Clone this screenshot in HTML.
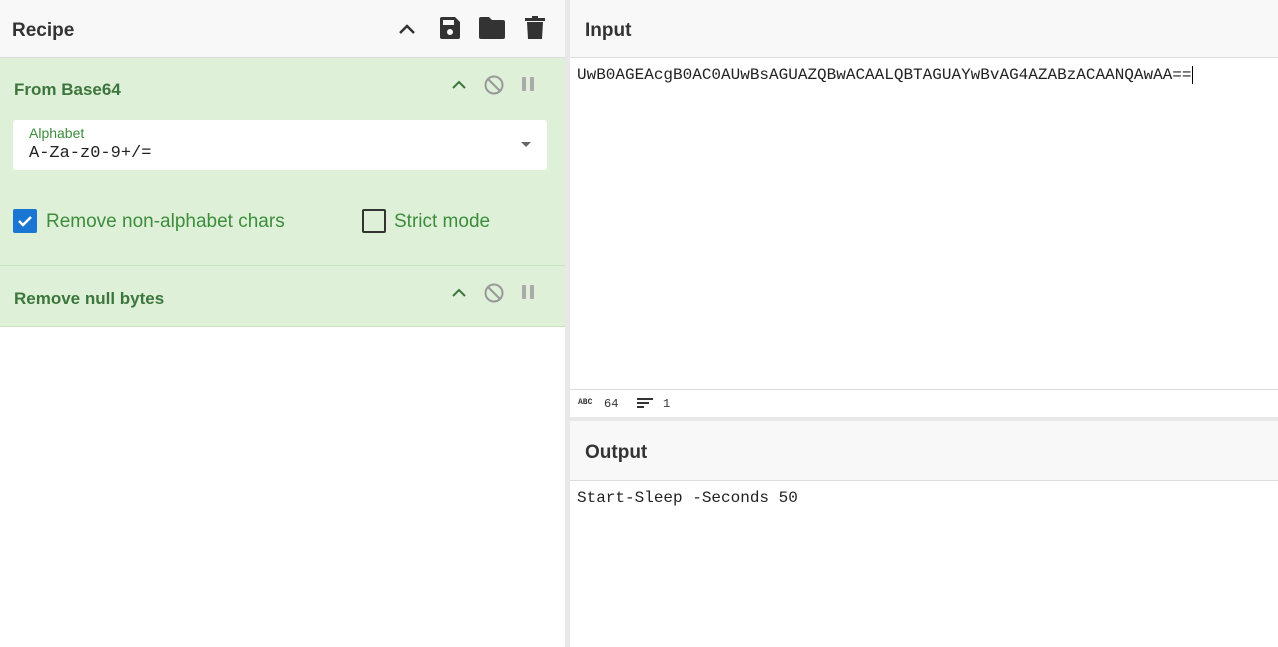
<!DOCTYPE html>
<html><head><meta charset="utf-8"><style>
*{box-sizing:border-box;margin:0;padding:0}
body{width:1278px;height:647px;overflow:hidden;background:#fff;font-family:"Liberation Sans",sans-serif;position:relative}
.left{position:absolute;left:0;top:0;width:565px;height:647px;background:#fff}
.div{position:absolute;left:565px;top:0;width:5px;height:647px;background:#e8e8e8}
.right{position:absolute;left:570px;top:0;width:708px;height:647px}
.hdr{height:58px;background:#f8f8f8;border-bottom:1px solid #ddd;display:flex;align-items:center;padding-left:12px;padding-top:5px;font-size:19px;font-weight:bold;color:#333}
.op{background:#dff0d8;border-bottom:1px solid #c9e3bf;position:relative}
.optitle{position:absolute;left:14px;font-weight:bold;font-size:17px;color:#3c763d}
.mono{font-family:"Liberation Mono",monospace}
</style></head><body>
<div class="left">
 <div class="hdr" style="height:58px">Recipe
  <svg style="position:absolute;left:396px;top:18px" width="22" height="22" viewBox="0 0 22 22"><path d="M4 15 L11 8 L18 15" stroke="#333" stroke-width="2.5" fill="none"/></svg>
  <svg style="position:absolute;left:438px;top:16px" width="24" height="24" viewBox="0 0 24 24"><path d="M2 3 a2 2 0 0 1 2-2 h13 l5 5 v15 a2 2 0 0 1-2 2 h-16 a2 2 0 0 1-2-2z" fill="#333"/><rect x="5" y="4" width="11" height="5" fill="#f8f8f8"/><circle cx="12" cy="16" r="3" fill="#f8f8f8"/></svg>
  <svg style="position:absolute;left:479px;top:17px" width="26" height="22" viewBox="0 0 26 22"><path d="M0 2 a2 2 0 0 1 2-2 h8 l3 3 h11 a2 2 0 0 1 2 2 v15 a2 2 0 0 1-2 2 h-22 a2 2 0 0 1-2-2z" fill="#333"/></svg>
  <svg style="position:absolute;left:525px;top:16px" width="20" height="24" viewBox="0 0 20 24"><rect x="0" y="2" width="20" height="3" fill="#333"/><rect x="7" y="0" width="6" height="3" fill="#333"/><path d="M2 6 h16 l-1 17 h-14z" fill="#333"/></svg>
 </div>
 <div class="op" style="height:208px">
  <div class="optitle" style="top:22px">From Base64</div>
  <svg style="position:absolute;left:450px;top:20px" width="18" height="14"><path d="M3 10 L9 4 L15 10" stroke="#3c763d" stroke-width="2" fill="none"/></svg>
  <svg style="position:absolute;left:483px;top:16px" width="22" height="22"><circle cx="11" cy="11" r="8.5" stroke="#999" stroke-width="2" fill="none"/><path d="M5 5 L17 17" stroke="#999" stroke-width="2"/></svg>
  <div style="position:absolute;left:522px;top:19px;width:4px;height:14px;background:#aaa"></div>
  <div style="position:absolute;left:530px;top:19px;width:4px;height:14px;background:#aaa"></div>
  <div style="position:absolute;left:13px;top:62px;width:534px;height:50px;background:#fff;border-radius:3px">
   <div style="position:absolute;left:16px;top:5px;font-size:14px;color:#3c8d3c">Alphabet</div>
   <div class="mono" style="position:absolute;left:16px;top:24px;font-size:17px;color:#222">A-Za-z0-9+/=</div>
   <div style="position:absolute;right:16px;top:22px;border-left:5px solid transparent;border-right:5px solid transparent;border-top:5px solid #666"></div>
  </div>
  <div style="position:absolute;left:13px;top:151px;width:24px;height:24px;background:#1976d2;border-radius:2px"><svg width="24" height="24"><path d="M6 12 L10 16 L18 8" stroke="#fff" stroke-width="2.5" fill="none"/></svg></div>
  <div style="position:absolute;left:46px;top:153px;font-size:19px;color:#3c8d3c">Remove non-alphabet chars</div>
  <div style="position:absolute;left:362px;top:151px;width:24px;height:24px;border:2px solid #333;border-radius:2px"></div>
  <div style="position:absolute;left:394px;top:153px;font-size:19px;color:#3c8d3c">Strict mode</div>
 </div>
 <div class="op" style="height:61px">
  <div class="optitle" style="top:23px">Remove null bytes</div>
  <svg style="position:absolute;left:450px;top:20px" width="18" height="14"><path d="M3 10 L9 4 L15 10" stroke="#3c763d" stroke-width="2" fill="none"/></svg>
  <svg style="position:absolute;left:483px;top:16px" width="22" height="22"><circle cx="11" cy="11" r="8.5" stroke="#999" stroke-width="2" fill="none"/><path d="M5 5 L17 17" stroke="#999" stroke-width="2"/></svg>
  <div style="position:absolute;left:522px;top:19px;width:4px;height:14px;background:#aaa"></div>
  <div style="position:absolute;left:530px;top:19px;width:4px;height:14px;background:#aaa"></div>
 </div>
</div>
<div class="div"></div>
<div class="right">
 <div class="hdr" style="padding-left:15px">Input</div>
 <div class="mono" style="position:absolute;left:7px;top:66px;font-size:16px;color:#222">UwB0AGEAcgB0AC0AUwBsAGUAZQBwACAALQBTAGUAYwBvAG4AZABzACAANQAwAA==<span style="border-left:1px solid #000"></span></div>
 <div style="position:absolute;left:0;top:389px;width:708px;height:28px;border-top:1px solid #ddd;background:#fff;font-size:12px;color:#333" class="mono">
  <span style="position:absolute;left:8px;top:8px;font-size:8px;font-weight:bold">ABC</span>
  <span style="position:absolute;left:34px;top:7px">64</span>
  <svg style="position:absolute;left:67px;top:8px" width="16" height="12"><rect x="0" y="0" width="16" height="2" fill="#333"/><rect x="0" y="4" width="12" height="2" fill="#333"/><rect x="0" y="8" width="7" height="2" fill="#333"/></svg>
  <span style="position:absolute;left:93px;top:7px">1</span>
 </div>
 <div style="position:absolute;left:0;top:417px;width:708px;height:4px;background:#e8e8e8"></div>
 <div class="hdr" style="position:absolute;top:421px;width:708px;height:60px;padding-left:15px">Output</div>
 <div class="mono" style="position:absolute;left:7px;top:489px;font-size:16px;color:#222">Start-Sleep -Seconds 50</div>
</div>
</body></html>
